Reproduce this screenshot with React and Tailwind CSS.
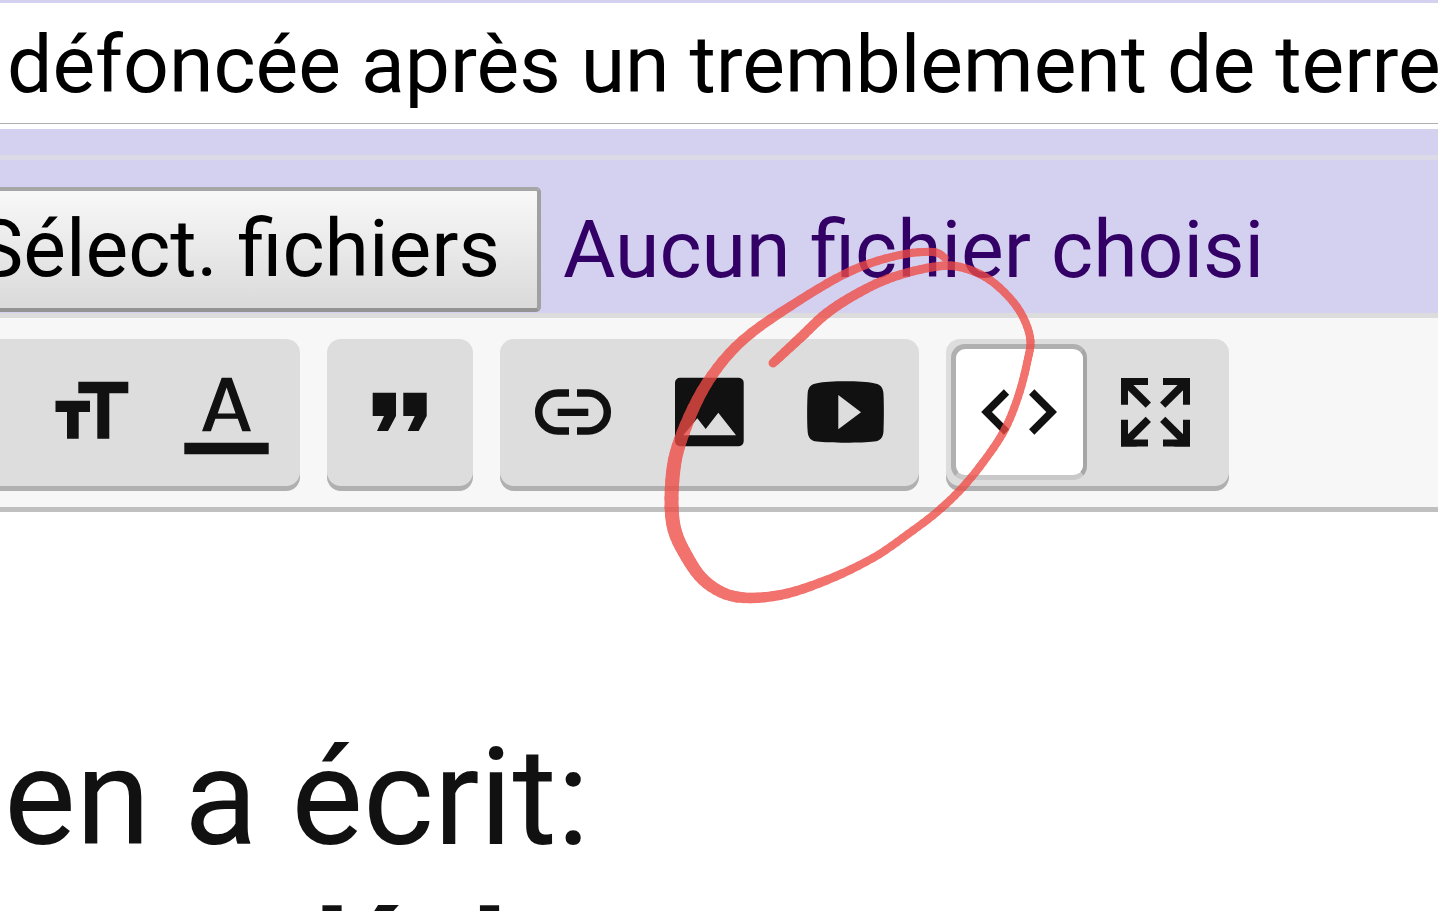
const INK = "#111111";

// hand-drawn circle, as [x, y, stroke width]
const scribble = [
  [773, 363, 9], [800, 338, 10], [827, 313, 10], [860, 292, 9.5], [893, 277, 9],
  [933, 267, 8.5], [960, 267, 8.5], [990, 280, 8], [1017, 307, 8], [1030, 337, 8],
  [1027, 363, 8], [1018, 397, 8], [1005, 429, 8], [987, 457, 8], [963, 487, 8], [937, 512, 8],
  [908, 534, 8], [873, 558, 8],
  [827, 580, 9], [780, 595, 10], [737, 597, 11], [707, 583, 12], [687, 557, 13],
  [673, 523, 14], [673, 473, 14], [683, 433, 13], [707, 383, 11], [743, 340, 10],
  [800, 300, 9], [853, 270, 8.5], [900, 255, 8], [933, 252, 8], [945, 258, 7],
];

function catmull(a, b, c, d, t) {
  return (
    0.5 *
    (2 * b +
      (c - a) * t +
      (2 * a - 5 * b + 4 * c - d) * t * t +
      (3 * b - a - 3 * c + d) * t * t * t)
  );
}

function scribbleSegments() {
  const out = [];
  for (let i = 0; i < scribble.length - 1; i++) {
    const p0 = scribble[Math.max(i - 1, 0)];
    const p1 = scribble[i];
    const p2 = scribble[i + 1];
    const p3 = scribble[Math.min(i + 2, scribble.length - 1)];
    for (let s = 0; s < 6; s++) {
      const t = s / 6;
      const u = (s + 1) / 6;
      out.push({
        x1: catmull(p0[0], p1[0], p2[0], p3[0], t),
        y1: catmull(p0[1], p1[1], p2[1], p3[1], t),
        x2: catmull(p0[0], p1[0], p2[0], p3[0], u),
        y2: catmull(p0[1], p1[1], p2[1], p3[1], u),
        w: p1[2] + (p2[2] - p1[2]) * t,
      });
    }
  }
  return out;
}

function Scribble() {
  return (
    <svg
      className="absolute left-0 top-0 pointer-events-none"
      width="1438"
      height="911"
      viewBox="0 0 1438 911"
    >
      <g opacity="0.78" stroke="#ef4b45" strokeLinecap="round">
        {scribbleSegments().map((s, i) => (
          <line key={i} x1={s.x1} y1={s.y1} x2={s.x2} y2={s.y2} strokeWidth={s.w} />
        ))}
      </g>
    </svg>
  );
}

function Icon({ children }) {
  return (
    <svg width="84" height="84" viewBox="0 0 84 84" fill={INK} className="overflow-visible">
      {children}
    </svg>
  );
}

function ToolButton({ active, children }) {
  if (active) {
    return (
      <div className="flex h-[136px] w-[136px] items-center justify-center rounded-[14px] border-t-[5px] border-r-[4px] border-b-[5px] border-l-[5px] border-t-[#b0b0b0] border-r-[#a6a6a6] border-b-[#c9c9c9] border-l-[#b0b0b0] bg-white">
        {children}
      </div>
    );
  }
  return <div className="flex h-[136px] w-[136px] items-center justify-center">{children}</div>;
}

function Group({ className = "", children }) {
  return (
    <div
      className={`flex rounded-[14px] bg-[#dddddd] p-[5px] pb-[6px] shadow-[0_5px_0_0_#b0b0b0] ${className}`}
    >
      {children}
    </div>
  );
}

function Corner({ transform }) {
  return (
    <g transform={transform}>
      <path d="M11.5 34.7V11.5H35" fill="none" stroke={INK} strokeWidth="7" />
      <path d="M12 12L35.3 35.2" fill="none" stroke={INK} strokeWidth="7.5" />
      <path d="M8 8H24L8 24Z" />
    </g>
  );
}

export default function App() {
  return (
    <div
      className="relative h-[911px] w-[1438px] overflow-hidden bg-white text-[#111111]"
      style={{ fontFamily: "Roboto, sans-serif" }}
    >
      <div className="h-[3px] bg-[#d4d0f0]" />
      <div className="h-[120px] overflow-hidden whitespace-nowrap pl-[7px] text-[80.5px] leading-[124px] text-black">
        défoncée après un tremblement de terre
      </div>
      <div className="h-px bg-[#b0b0b0]" />
      <div className="h-[5px] bg-white" />
      <div className="h-[26px] bg-[#d4d0f0]" />
      <div className="h-[5px] bg-[#dcdae6]" />

      <div className="flex h-[153px] items-start bg-[#d4d0f0] pt-[27px]">
        <div className="-ml-[40px] flex h-[125px] w-[581px] items-center justify-end rounded-[5px] border-[4px] border-t-[#a6a6a6] border-r-[#a0a0a0] border-b-[#939393] border-l-[#a6a6a6] bg-gradient-to-b from-[#f8f8f8] to-[#dadada] pr-[37px] text-[80.5px] text-black whitespace-nowrap">
          Sélect. fichiers
        </div>
        <span className="ml-[22px] whitespace-nowrap text-[80.5px] leading-[125px] text-[#330066]">
          Aucun fichier choisi
        </span>
      </div>

      <div className="flex h-[199px] items-start gap-[27px] border-t-[5px] border-b-[5px] border-t-[#dcdcdc] border-b-[#c0c0c0] bg-[#f7f7f7] pt-[21px]">
        <Group className="-ml-[118px]">
          <ToolButton />
          <ToolButton>
            <Icon>
              <path d="M6.5 30.7H41V42H29.7V68.7H18V42H6.5Z" />
              <path d="M29.3 11.7H79.3V23.3H60.3V68.7H48.3V23.3H29.3Z" />
            </Icon>
          </ToolButton>
          <ToolButton>
            <Icon>
              <path d="M36.7 7.7H46.7L66 61.3H57.3L52.8 48.7H30.4L25.9 61.3H17ZM41.6 17.4L32.7 43.5H50.6Z" />
              <path d="M-0.7 72.7H83.7V84.3H-0.7Z" />
            </Icon>
          </ToolButton>
        </Group>

        <Group>
          <ToolButton>
            <Icon>
              <path d="M14.7 22.7H38V46L30 61H19L26 46H14.7Z" />
              <path d="M45.3 22.7H68.7V46L60.7 61H49.7L56.7 46H45.3Z" />
            </Icon>
          </ToolButton>
        </Group>

        <Group className="w-[419px]">
          <ToolButton>
            <Icon>
              <g fill="none" stroke={INK} strokeWidth="7.5">
                <path d="M38 23H26.7A19 19 0 0 0 26.7 61H38" />
                <path d="M46 23H57.3A19 19 0 0 1 57.3 61H46" />
              </g>
              <path d="M26.7 38.7H57.3V46H26.7Z" />
            </Icon>
          </ToolButton>
          <ToolButton>
            <Icon>
              <path
                fillRule="evenodd"
                d="M13 7.7H72A5 5 0 0 1 76.7 12.7V71.3A5 5 0 0 1 72 76.3H13A5 5 0 0 1 8 71.3V12.7A5 5 0 0 1 13 7.7ZM16.3 65.3H69L51.3 42.7L38.7 59L30.3 48.3Z"
              />
            </Icon>
          </ToolButton>
          <ToolButton>
            <Icon>
              <path
                fillRule="evenodd"
                d="M14 13.2C26 10.6 59 10.6 71 13.2C77 14 80.2 17 80.5 24C81 35 81 50 80.5 61C80.2 68 77 71 71 71.6C59 73.2 26 73.2 14 71.6C8 71 5 68 4.6 61C4 50 4 35 4.6 24C5 17 8 14 14 13.2ZM35.3 25V59.3L58 42.3Z"
              />
            </Icon>
          </ToolButton>
        </Group>

        <Group className="w-[283px]">
          <ToolButton active>
            <Icon>
              <g fill="none" stroke={INK} strokeWidth="7.5">
                <path d="M28.5 22L8.5 42L28.5 62" />
                <path d="M53.7 22L73.7 42L53.7 62" />
              </g>
            </Icon>
          </ToolButton>
          <ToolButton>
            <Icon>
              <Corner />
              <Corner transform="matrix(-1 0 0 1 85 0)" />
              <Corner transform="matrix(1 0 0 -1 0 84.5)" />
              <Corner transform="matrix(-1 0 0 -1 85 84.5)" />
            </Icon>
          </ToolButton>
        </Group>
      </div>

      <div className="h-[399px] overflow-hidden pl-[4px] pt-[218px]">
        <p className="whitespace-nowrap text-[135.3px] leading-[136px]">en a écrit:</p>
        <p className="mt-[27px] whitespace-nowrap pl-[310px] text-[136px] font-bold leading-[136px] text-[#111111]">
          l<span className="-ml-[12px]">é</span>
          <span className="ml-[60px]">l</span>
        </p>
      </div>

      <Scribble />
    </div>
  );
}
